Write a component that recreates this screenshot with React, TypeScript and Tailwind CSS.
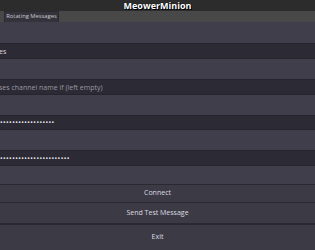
export default function App() {
  const font = { fontFamily: '"Open Sans", "Noto Sans", sans-serif' };
  return (
    <div
      className="w-[315px] h-[250px] overflow-hidden bg-[#3f3d49] flex flex-col text-[7px] text-[#dcdce0]"
      style={font}
    >
      {/* title bar */}
      <div className="h-[11px] bg-[#2c2c2c] flex items-center justify-center shrink-0">
        <span className="text-[9px] font-bold text-white leading-none [text-shadow:0_0_1px_#000,1px_1px_0_#000]">
          MeowerMinion
        </span>
      </div>

      {/* tabs */}
      <div className="h-[11px] bg-[#484848] flex items-end pl-[4px] shrink-0">
        <div className="h-[11px] w-[55px] bg-[#34333c] border border-b-0 border-[#2a2a30] flex items-center justify-center whitespace-nowrap text-[5.8px] text-[#c8c8cc] leading-none">
          Rotating Messages
        </div>
      </div>

      {/* form rows */}
      <div className="h-[21px] bg-[#403e4a] shrink-0" />
      <div className="h-[16px] bg-[#2c2a34] border-y border-[#26242c] flex items-center shrink-0">
        <span className="-ml-[1px] leading-none">es</span>
      </div>
      <div className="h-[20px] bg-[#403e4a] shrink-0" />
      <div className="h-[16px] bg-[#2c2a34] border-y border-[#26242c] flex items-center shrink-0">
        <span className="-ml-[1px] leading-none text-[#9a99a2]">ses channel name if (left empty)</span>
      </div>
      <div className="h-[20px] bg-[#403e4a] shrink-0" />
      <div className="h-[15px] bg-[#2c2a34] border-y border-[#26242c] flex items-center shrink-0">
        <span className="leading-none tracking-[0.4px] text-[#e8e8ea]">••••••••••••••••••</span>
      </div>
      <div className="h-[20px] bg-[#403e4a] shrink-0" />
      <div className="h-[16px] bg-[#2c2a34] border-y border-[#26242c] flex items-center shrink-0">
        <span className="leading-none tracking-[0.4px] text-[#e8e8ea]">•••••••••••••••••••••••</span>
      </div>
      <div className="h-[18px] bg-[#403e4a] shrink-0" />

      {/* buttons */}
      <div className="h-[18px] bg-[#3c3a45] border-t border-[#2a2831] flex items-center justify-center shrink-0">
        Connect
      </div>
      <div className="h-[21px] bg-[#3c3a45] border-t border-[#2a2831] flex items-center justify-center shrink-0">
        Send Test Message
      </div>
      <div className="flex-1 bg-[#3c3a45] border-t-2 border-[#2a2831] flex items-center justify-center">
        Exit
      </div>
    </div>
  );
}
